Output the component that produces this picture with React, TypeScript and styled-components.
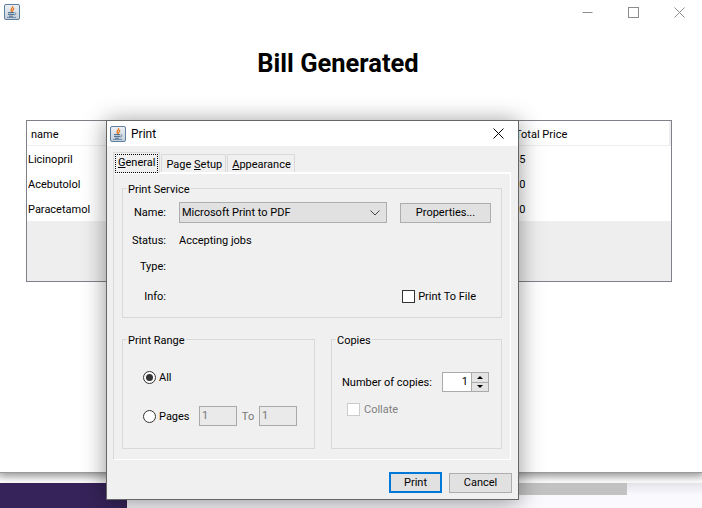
import React from 'react';
import styled, { createGlobalStyle } from 'styled-components';

const GlobalStyle = createGlobalStyle`
  html, body {
    margin: 0;
    padding: 0;
    background: #f9f9fe;
  }
  body {
    font-family: Roboto, 'Noto Sans', sans-serif;
    font-size: 11px;
    color: #000;
  }
`;

const Desktop = styled.div`
  position: relative;
  width: 702px;
  height: 508px;
  overflow: hidden;
  background: #f9f9fe;
`;

/* ---- the bill window behind ---- */

const BillWindow = styled.div`
  position: relative;
  z-index: 2;
  height: 472px;
  background: #fff;
  border-bottom: 1px solid #9a9a9a;
  box-shadow: 0 3px 8px rgba(0, 0, 0, 0.28);
`;

const WindowBar = styled.div`
  display: flex;
  align-items: center;
  justify-content: space-between;
  height: 24px;
  padding-left: 4px;
`;

const WindowControls = styled.div`
  display: flex;
  align-items: center;
  color: #8c8c8c;
`;

const ControlButton = styled.span`
  display: flex;
  align-items: center;
  justify-content: center;
  width: 46px;
  height: 24px;
`;

const BillTitle = styled.h1`
  margin: 24px 0 0;
  width: 676px;
  font-size: 25.5px;
  line-height: 30px;
  font-weight: 700;
  text-align: center;
`;

const BillTable = styled.div`
  box-sizing: border-box;
  width: 646px;
  height: 162px;
  margin: 42px 0 0 26px;
  border: 1px solid #808088;
  background: #eee;
`;

const TableRow = styled.div<{ $head?: boolean }>`
  display: grid;
  grid-template-columns: 484px 1fr;
  align-items: center;
  height: 25px;
  background: #fff;
  box-sizing: border-box;
  padding-top: 2px;
  padding-left: ${(p) => (p.$head ? '4px' : '1px')};
  ${(p) => p.$head && 'border-bottom: 1px solid #eee; border-right: 2px solid #eee;'}
`;

const PriceCell = styled.span<{ $head?: boolean }>`
  padding-left: ${(p) => (p.$head ? '0' : '1px')};
`;

const Strip = styled.div`
  height: 10px;
  background: linear-gradient(#d8d8d8, #fafafa 8px);
`;

const Taskbar = styled.div`
  display: flex;
  align-items: flex-start;
  height: 25px;
  background: linear-gradient(#e4e4ea, #f9f9fe 12px);
`;

const TaskbarAccent = styled.div`
  width: 127px;
  height: 25px;
  background: #362359;
`;

const TaskbarProgress = styled.div`
  width: 500px;
  height: 12px;
  background: #c2c2c2;
`;

/* ---- print dialog ---- */

const Dialog = styled.div`
  position: absolute;
  z-index: 3;
  left: 106px;
  top: 120px;
  box-sizing: border-box;
  width: 413px;
  height: 380px;
  display: flex;
  flex-direction: column;
  background: #f0f0f0;
  border: 1px solid #666;
  box-shadow: 0 2px 22px rgba(0, 0, 0, 0.42);
`;

const DialogBar = styled.div`
  display: flex;
  align-items: center;
  gap: 5px;
  height: 25px;
  flex: none;
  padding: 0 14px 0 3px;
  background: #fff;
  font-size: 12px;
`;

const DialogTitle = styled.span`
  flex: 1;
`;

const TabRow = styled.div`
  display: flex;
  align-items: flex-end;
  height: 20px;
  margin: 6px 0 0 6px;
  position: relative;
  z-index: 1;
`;

const Tab = styled.div<{ $active?: boolean }>`
  box-sizing: border-box;
  height: ${(p) => (p.$active ? '21px' : '18px')};
  margin-right: 1px;
  margin-bottom: ${(p) => (p.$active ? '-1px' : '0')};
  padding: ${(p) => (p.$active ? '1px' : '2px 3px 0 4px')};
  border: 1px solid #d9d9d9;
  border-bottom: 0;
  background: #f0f0f0;
  line-height: 15px;
`;

const FocusLabel = styled.span`
  display: block;
  padding: 0 2px;
  height: 17px;
  line-height: 16px;
  border: 1px dotted #000;
`;

const TabPane = styled.div`
  box-sizing: border-box;
  width: 398px;
  height: 288px;
  margin-left: 6px;
  padding: 5px 8px 0;
  border: 1px solid #fff;
  border-left-color: #d9d9d9;
  border-top-width: 2px;
`;

const Group = styled.fieldset<{ $height: number; $width?: number }>`
  box-sizing: border-box;
  min-width: 0;
  margin: 0;
  padding: 0;
  height: ${(p) => p.$height}px;
  width: ${(p) => (p.$width ? `${p.$width}px` : 'auto')};
  border: 1px solid #d9d9d9;
`;

const GroupTitle = styled.legend`
  margin-left: 4px;
  padding: 4px 1px 0;
  line-height: 14px;
`;

const ServiceRows = styled.div`
  padding-top: 5px;
`;

const ServiceRow = styled.div<{ $gap?: number; $height?: number }>`
  display: flex;
  align-items: center;
  height: ${(p) => p.$height ?? 20}px;
  margin-top: ${(p) => p.$gap ?? 0}px;
`;

const ServiceLabel = styled.span`
  flex: none;
  width: 43px;
  margin-right: 13px;
  text-align: right;
`;

const Combo = styled.div`
  box-sizing: border-box;
  display: flex;
  align-items: center;
  justify-content: space-between;
  width: 208px;
  height: 21px;
  padding: 0 6px 0 2px;
  background: #e1e1e1;
  border: 1px solid #adadad;
`;

const PushButton = styled.button<{ $width: number; $default?: boolean }>`
  box-sizing: border-box;
  width: ${(p) => p.$width}px;
  height: ${(p) => (p.$default ? 21 : 20)}px;
  padding: 0;
  background: #e1e1e1;
  border: ${(p) => (p.$default ? '2px solid #0078d7' : '1px solid #adadad')};
  border-radius: 0;
  color: #000;
  font: inherit;
`;

const PropertiesButton = styled(PushButton)`
  margin-left: 13px;
`;

const PrintToFile = styled.label`
  display: flex;
  align-items: center;
  gap: 3px;
  margin-left: auto;
  margin-right: 25px;
`;

const CheckBox = styled.span<{ $disabled?: boolean }>`
  box-sizing: border-box;
  flex: none;
  width: 13px;
  height: 13px;
  background: #fff;
  border: 1px solid ${(p) => (p.$disabled ? '#ccc' : '#333')};
`;

const LowerGroups = styled.div`
  display: flex;
  justify-content: space-between;
  margin-top: 12px;
`;

const RangeRows = styled.div`
  padding: 19px 0 0 20px;
`;

const RangeRow = styled.div<{ $gap?: number }>`
  display: flex;
  align-items: center;
  height: 20px;
  margin-top: ${(p) => p.$gap ?? 0}px;
`;

const Radio = styled.span<{ $checked?: boolean }>`
  box-sizing: border-box;
  display: flex;
  align-items: center;
  justify-content: center;
  flex: none;
  width: 13px;
  height: 13px;
  margin-right: 3px;
  background: #fff;
  border: 1px solid #333;
  border-radius: 50%;
  &::after {
    content: '';
    display: ${(p) => (p.$checked ? 'block' : 'none')};
    width: 7px;
    height: 7px;
    border-radius: 50%;
    background: #333;
  }
`;

const PageField = styled.span`
  box-sizing: border-box;
  display: block;
  width: 38px;
  height: 20px;
  padding-left: 2px;
  line-height: 18px;
  background: #eaeaea;
  border: 1px solid #a9a9a9;
  color: #777;
`;

const PagesLabel = styled.span`
  width: 40px;
`;

const ToLabel = styled.span`
  width: 22px;
  text-align: center;
  color: #777;
`;

const CopiesRow = styled.div`
  display: flex;
  align-items: center;
  justify-content: space-between;
  height: 20px;
  margin: 24px 12px 0 10px;
`;

const Spinner = styled.div`
  box-sizing: border-box;
  display: flex;
  justify-content: flex-end;
  width: 47px;
  height: 20px;
  padding: 0;
  background: #fff;
  border: 1px solid #ababab;
`;

const SpinnerValue = styled.span`
  flex: 1;
  padding-right: 3px;
  line-height: 18px;
  text-align: right;
`;

const SpinnerButtons = styled.div`
  display: flex;
  flex-direction: column;
  width: 16px;
  border-left: 1px solid #ababab;
`;

const SpinnerButton = styled.span<{ $down?: boolean }>`
  display: flex;
  flex: 1;
  align-items: center;
  justify-content: center;
  background: #e4e4e4;
  ${(p) => p.$down && 'border-top: 1px solid #ababab;'}
`;

const CollateRow = styled.label`
  display: flex;
  align-items: center;
  gap: 4px;
  height: 20px;
  margin: 7px 0 0 15px;
  color: #808080;
`;

const DialogFooter = styled.div`
  display: flex;
  align-items: center;
  justify-content: flex-end;
  gap: 7px;
  margin-top: 12px;
  padding-right: 6px;
`;

const Underlined = styled.span`
  text-decoration: underline;
`;

const Triangle = styled.span<{ $down?: boolean }>`
  width: 0;
  height: 0;
  border-left: 3px solid transparent;
  border-right: 3px solid transparent;
  ${(p) => (p.$down ? 'border-top: 3px solid #000;' : 'border-bottom: 3px solid #000;')}
`;

const JavaIcon: React.FC = () => (
  <svg width="16" height="16" viewBox="0 0 16 16">
    <defs>
      <linearGradient id="javaBack" x1="0" y1="0" x2="0" y2="1">
        <stop offset="0" stopColor="#eef1f5" />
        <stop offset="1" stopColor="#c3ced9" />
      </linearGradient>
    </defs>
    <rect x="0.5" y="0.5" width="15" height="15" rx="1.5" fill="url(#javaBack)" stroke="#5f7f9f" />
    <path d="M8.5 2.2c1 1.5-2.2 2.6-1.3 4.6.2.5.5.8.8 1-.2-1.3 2.6-2 1.5-3.9" fill="none" stroke="#e8791f" strokeWidth="1.3" />
    <path d="M4 8.6h6M4 10.4h6M5 12.2h4" stroke="#46688a" strokeWidth="1" />
    <path d="M10.5 8.8c1.9-.4 2 1.9-.5 2.2M3 13.4h9" fill="none" stroke="#5f7f9f" strokeWidth="0.9" />
  </svg>
);

const rows = [
  { name: 'Licinopril', price: '45' },
  { name: 'Acebutolol', price: '30' },
  { name: 'Paracetamol', price: '20' },
];

export default function App() {
  return (
    <Desktop>
      <GlobalStyle />
      <BillWindow>
        <WindowBar>
          <JavaIcon />
          <WindowControls>
            <ControlButton>
              <svg width="11" height="11" viewBox="0 0 11 11">
                <path d="M0.5 5.5h10" stroke="currentColor" />
              </svg>
            </ControlButton>
            <ControlButton>
              <svg width="11" height="11" viewBox="0 0 11 11">
                <rect x="0.5" y="0.5" width="10" height="10" fill="none" stroke="currentColor" />
              </svg>
            </ControlButton>
            <ControlButton>
              <svg width="11" height="11" viewBox="0 0 11 11">
                <path d="M0.5 0.5l10 10M10.5 0.5l-10 10" stroke="currentColor" />
              </svg>
            </ControlButton>
          </WindowControls>
        </WindowBar>
        <BillTitle>Bill Generated</BillTitle>
        <BillTable>
          <TableRow $head>
            <span>name</span>
            <PriceCell $head>Total Price</PriceCell>
          </TableRow>
          {rows.map((row) => (
            <TableRow key={row.name}>
              <span>{row.name}</span>
              <PriceCell>{row.price}</PriceCell>
            </TableRow>
          ))}
        </BillTable>
      </BillWindow>
      <Strip />
      <Taskbar>
        <TaskbarAccent />
        <TaskbarProgress />
      </Taskbar>

      <Dialog>
        <DialogBar>
          <JavaIcon />
          <DialogTitle>Print</DialogTitle>
          <svg width="11" height="11" viewBox="0 0 11 11">
            <path d="M0.5 0.5l10 10M10.5 0.5l-10 10" stroke="#000" fill="none" />
          </svg>
        </DialogBar>
        <TabRow>
          <Tab $active>
            <FocusLabel>
              <Underlined>G</Underlined>eneral
            </FocusLabel>
          </Tab>
          <Tab>
            Page <Underlined>S</Underlined>etup
          </Tab>
          <Tab>
            <Underlined>A</Underlined>ppearance
          </Tab>
        </TabRow>
        <TabPane>
          <Group $height={139}>
            <GroupTitle>Print Service</GroupTitle>
            <ServiceRows>
              <ServiceRow $height={21}>
                <ServiceLabel>Name:</ServiceLabel>
                <Combo>
                  <span>Microsoft Print to PDF</span>
                  <svg width="10" height="6" viewBox="0 0 10 6">
                    <path d="M0.5 0.5l4.5 4.5 4.5-4.5" fill="none" stroke="#444" />
                  </svg>
                </Combo>
                <PropertiesButton $width={91}>Properties...</PropertiesButton>
              </ServiceRow>
              <ServiceRow $gap={7}>
                <ServiceLabel>Status:</ServiceLabel>
                <span>Accepting jobs</span>
              </ServiceRow>
              <ServiceRow $gap={6}>
                <ServiceLabel>Type:</ServiceLabel>
              </ServiceRow>
              <ServiceRow $gap={10}>
                <ServiceLabel>Info:</ServiceLabel>
                <PrintToFile>
                  <CheckBox />
                  Print To File
                </PrintToFile>
              </ServiceRow>
            </ServiceRows>
          </Group>
          <LowerGroups>
            <Group $height={119} $width={193}>
              <GroupTitle>Print Range</GroupTitle>
              <RangeRows>
                <RangeRow>
                  <Radio $checked />
                  All
                </RangeRow>
                <RangeRow $gap={19}>
                  <Radio />
                  <PagesLabel>Pages</PagesLabel>
                  <PageField>1</PageField>
                  <ToLabel>To</ToLabel>
                  <PageField>1</PageField>
                </RangeRow>
              </RangeRows>
            </Group>
            <Group $height={119} $width={171}>
              <GroupTitle>Copies</GroupTitle>
              <CopiesRow>
                <span>Number of copies:</span>
                <Spinner>
                  <SpinnerValue>1</SpinnerValue>
                  <SpinnerButtons>
                    <SpinnerButton>
                      <Triangle />
                    </SpinnerButton>
                    <SpinnerButton $down>
                      <Triangle $down />
                    </SpinnerButton>
                  </SpinnerButtons>
                </Spinner>
              </CopiesRow>
              <CollateRow>
                <CheckBox $disabled />
                Collate
              </CollateRow>
            </Group>
          </LowerGroups>
        </TabPane>
        <DialogFooter>
          <PushButton $width={53} $default>
            Print
          </PushButton>
          <PushButton $width={63}>Cancel</PushButton>
        </DialogFooter>
      </Dialog>
    </Desktop>
  );
}
